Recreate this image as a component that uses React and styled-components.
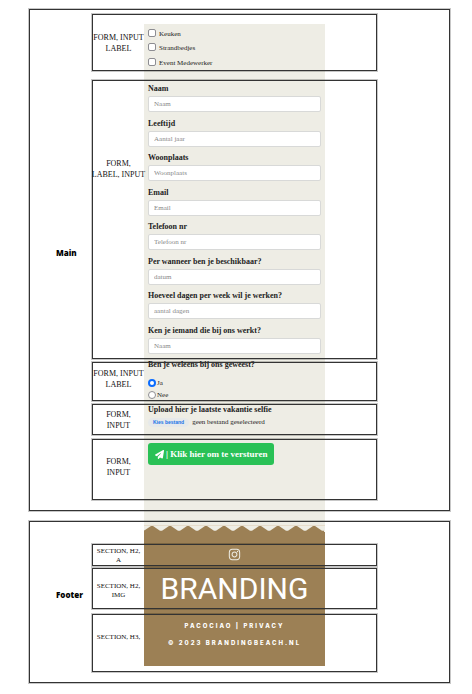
import React from "react";
import styled, { createGlobalStyle } from "styled-components";
import { FaInstagram } from "react-icons/fa";
import { FaPaperPlane } from "react-icons/fa6";

const serif = '"Liberation Serif", "Times New Roman", serif';

const GlobalStyle = createGlobalStyle`
  *, *::before, *::after { box-sizing: border-box; }
  body { margin: 0; background: #fff; color: #222; font-family: ${serif}; }
`;

const Stage = styled.div`
  display: grid;
  grid-template-columns: 63fr 52fr 181fr 52fr 73fr;
  padding: 9px 22px 11px 29px;
`;

/* Phone page */
const Phone = styled.div`
  grid-area: 1 / 3;
  align-self: start;
  min-width: 0;
  margin-top: 15px;
  background: #eeede5;
  font-size: 7px;
  line-height: 9px;
`;

const Form = styled.form`
  display: flex;
  flex-direction: column;
  align-items: stretch;
  padding: 3px 4px 60px;
`;

const Group = styled.fieldset`
  min-width: 0;
  margin: 0 0 ${(p) => p.$after}px;
  padding: 0;
  border: 0;
`;

const CheckList = styled.div`
  display: grid;
  grid-auto-rows: 1fr;
  min-height: 44px;
`;

const Choice = styled.label`
  display: flex;
  align-items: center;
  gap: ${(p) => p.$gap}px;
  min-height: 12px;
`;

const Tick = styled.input`
  appearance: none;
  flex: none;
  width: 8px;
  height: 8px;
  margin: 0 0 3px;
  border: 1px solid #8d8d92;
  border-radius: 2px;
  background: #fff;
  &:checked { background: #0a6cff; border-color: #0a6cff; }
`;

const Radio = styled(Tick)`
  margin: 0;
  border-radius: 50%;
  &:checked { border: 2px solid #0a6cff; background: #fff; }
`;

const FieldList = styled.div`
  display: grid;
  grid-auto-rows: 1fr;
  min-height: 276px;
`;

const Field = styled.label`
  display: flex;
  flex-direction: column;
  gap: 3px;
`;

const Caption = styled.span`
  display: block;
  font: 700 8px/9px ${serif};
`;

const Legend = styled.legend`
  padding: 0;
  margin-bottom: 8px;
  font: 700 8px/9px ${serif};
`;

const TextBox = styled.input`
  width: 100%;
  height: 16px;
  padding: 0 5px;
  border: 1px solid #d8d9d8;
  border-radius: 2px;
  background: #fff;
  color: #222;
  font: 7px ${serif};
  &::placeholder { color: #888; opacity: 1; }
`;

const Upload = styled.label`
  display: flex;
  flex-direction: column;
  gap: 4px;
`;

const UploadRow = styled.span`
  display: flex;
  align-items: center;
  gap: 3px;
`;

const Pill = styled.span`
  padding: 0 5px;
  border-radius: 5px;
  background: #e6e9ea;
  color: #1673e8;
  font: 700 5px/9px "Liberation Sans", Arial, sans-serif;
`;

const FileInput = styled.input`
  appearance: none;
  width: 0;
  height: 0;
  opacity: 0;
`;

const Submit = styled.button`
  display: flex;
  align-items: center;
  align-self: flex-start;
  gap: 2px;
  height: 22px;
  padding: 0 7px;
  border: 0;
  border-radius: 3px;
  background: #29c156;
  color: #fff;
  font: 700 9px ${serif};
  white-space: nowrap;
`;

const Zigzag = styled.svg`
  display: block;
  width: 100%;
  height: 7px;
`;

const SiteFooter = styled.footer`
  display: flex;
  flex-direction: column;
  align-items: center;
  padding: 16px 0 19px;
  background: #9c8055;
  color: #fff;
`;

const IconLink = styled.a`
  display: flex;
  color: #eeede5;
`;

const Brand = styled.h2`
  margin: 10px 0 14px;
  font: 400 30px/36px Roboto, sans-serif;
`;

const Small = styled.p`
  margin: 0 0 ${(p) => p.$after}px;
  font: 800 6px/9px Inter, sans-serif;
  letter-spacing: 2px;
  white-space: nowrap;
  a { color: inherit; text-decoration: none; }
`;

/* Outlines drawn over the page */
const Notes = styled.div`
  grid-area: 1 / 1 / 2 / -1;
  display: grid;
  grid-template-columns: subgrid;
  row-gap: 10px;
  pointer-events: none;
`;

const outline = `
  border: 1px solid #333;
  box-shadow: 0 0 0 1px rgba(0, 0, 0, 0.22);
`;

const Region = styled.section`
  grid-column: 1 / -1;
  display: grid;
  grid-template-columns: subgrid;
  ${outline}
`;

const RegionName = styled.h2`
  align-self: center;
  margin: 0 0 14px;
  padding-left: 26px;
  color: #000;
  font: 800 8px/12px "Open Sans", sans-serif;
`;

const Bands = styled.div`
  grid-column: 2 / 5;
  display: flex;
  flex-direction: column;
  padding: ${(p) => p.$top}px 0 10px;
`;

const Band = styled.div`
  display: flex;
  min-height: ${(p) => p.$height}px;
  margin-bottom: ${(p) => p.$after}px;
  ${outline}
`;

const Note = styled.p`
  display: flex;
  flex-direction: column;
  align-items: center;
  justify-content: center;
  width: 18%;
  margin: 0;
  padding: ${(p) => p.$drop || 0}px 0 ${(p) => p.$lift || 0}px;
  color: #111;
  font-size: ${(p) => (p.$small ? 7 : 8)}px;
  line-height: ${(p) => (p.$small ? 9 : 11)}px;
  white-space: nowrap;
`;

const fields = [
  ["Naam", "Naam"],
  ["Leeftijd", "Aantal jaar"],
  ["Woonplaats", "Woonplaats"],
  ["Email", "Email"],
  ["Telefoon nr", "Telefoon nr"],
  ["Per wanneer ben je beschikbaar?", "datum"],
  ["Hoeveel dagen per week wil je werken?", "aantal dagen"],
  ["Ken je iemand die bij ons werkt?", "Naam"],
];

const mainBands = [
  { lines: ["FORM, INPUT", "LABEL"], height: 57, after: 9 },
  { lines: ["FORM,", "LABEL, INPUT"], height: 279, after: 3, lift: 102 },
  { lines: ["FORM, INPUT", "LABEL"], height: 39, after: 3, lift: 5 },
  { lines: ["FORM,", "INPUT"], height: 31, after: 4 },
  { lines: ["FORM,", "INPUT"], height: 61, after: 0, lift: 6 },
];

const footerBands = [
  { lines: ["SECTION, H2,", "A"], height: 22, after: 2, drop: 2 },
  { lines: ["SECTION, H2,", "IMG"], height: 41, after: 5, drop: 4 },
  { lines: ["SECTION, H3,"], height: 58, after: 0, lift: 12 },
];

function Outline({ name, top, bands, small }) {
  return (
    <Region>
      <RegionName>{name}</RegionName>
      <Bands $top={top}>
        {bands.map((b, i) => (
          <Band key={i} $height={b.height} $after={b.after}>
            <Note $small={small} $lift={b.lift} $drop={b.drop}>
              {b.lines.map((line) => (
                <span key={line}>{line}</span>
              ))}
            </Note>
          </Band>
        ))}
      </Bands>
    </Region>
  );
}

function teeth() {
  let d = "M0 7V5.5L1 5";
  for (let x = 8; x < 181; x += 18) d += `L${x - 1} 1H${x + 1}L${x + 8} 5.8H${x + 10}`;
  return `${d}V7Z`;
}

export default function App() {
  return (
    <>
      <GlobalStyle />
      <Stage>
        <Phone>
          <Form onSubmit={(e) => e.preventDefault()}>
            <Group $after={13}>
              <CheckList>
                {["Keuken", "Strandbedjes", "Event Medewerker"].map((t) => (
                  <Choice key={t} $gap={3}>
                    <Tick type="checkbox" />
                    {t}
                  </Choice>
                ))}
              </CheckList>
            </Group>
            <FieldList>
              {fields.map(([label, hint]) => (
                <Field key={label}>
                  <Caption>{label}</Caption>
                  <TextBox type="text" placeholder={hint} />
                </Field>
              ))}
            </FieldList>
            <Group $after={4}>
              <Legend>Ben je weleens bij ons geweest?</Legend>
              <Choice $gap={1}>
                <Radio type="radio" name="geweest" defaultChecked />
                Ja
              </Choice>
              <Choice $gap={1}>
                <Radio type="radio" name="geweest" />
                Nee
              </Choice>
            </Group>
            <Group $after={16}>
              <Upload>
                <Caption>Upload hier je laatste vakantie selfie</Caption>
                <UploadRow>
                  <Pill>Kies bestand</Pill>
                  geen bestand geselecteerd
                  <FileInput type="file" />
                </UploadRow>
              </Upload>
            </Group>
            <Submit type="submit">
              <FaPaperPlane size={9} />
              <span>| Klik hier om te versturen</span>
            </Submit>
          </Form>
          <Zigzag viewBox="0 0 181 7" preserveAspectRatio="none" aria-hidden="true">
            <path d="M0 .5H181" stroke="#e6dccb" strokeWidth="1" />
            <path d={teeth()} fill="#9c8055" />
          </Zigzag>
          <SiteFooter>
            <IconLink href="#instagram" aria-label="Instagram">
              <FaInstagram size={13} />
            </IconLink>
            <Brand>BRANDING</Brand>
            <Small $after={8}>
              <a href="#pacociao">PACOCIAO</a> | <a href="#privacy">PRIVACY</a>
            </Small>
            <Small $after={0}>© 2023 BRANDINGBEACH.NL</Small>
          </SiteFooter>
        </Phone>
        <Notes>
          <Outline name="Main" top={4} bands={mainBands} />
          <Outline name="Footer" top={22} bands={footerBands} small />
        </Notes>
      </Stage>
    </>
  );
}
